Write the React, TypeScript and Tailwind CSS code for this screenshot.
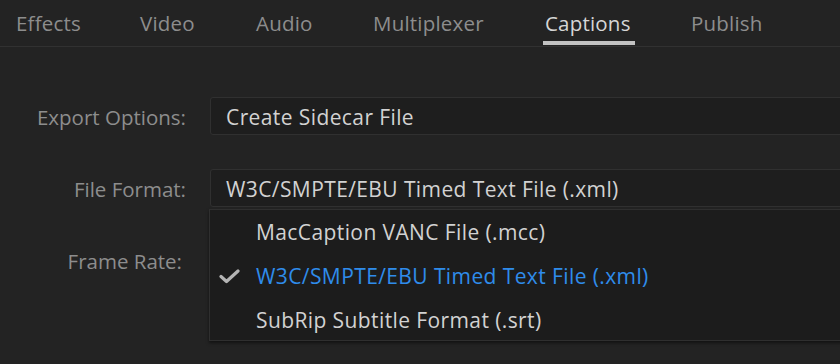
const tabs = [
  { name: "Effects", w: 124 },
  { name: "Video", w: 116 },
  { name: "Audio", w: 117 },
  { name: "Multiplexer", w: 172 },
  { name: "Captions", w: 146 },
  { name: "Publish", w: 100 },
];

const options = [
  "MacCaption VANC File (.mcc)",
  "W3C/SMPTE/EBU Timed Text File (.xml)",
  "SubRip Subtitle Format (.srt)",
];

const Field = ({ label, value, inset }: { label: string; value?: string; inset?: boolean }) => (
  <div className="flex items-center h-[38px]">
    <div
      className={`w-[186px] text-right text-[20.5px] text-[#8d8d8d] pt-[3px] ${
        inset ? "pr-[4px]" : ""
      }`}
    >
      {label}
    </div>
    <div className="ml-[24px] flex-1 h-full flex items-center rounded-[3px] border border-[#303030] bg-[#1e1e1e] pl-[15px] pt-[3px] text-[21px] tracking-[0.4px] text-[#d2d2d2]">
      {value}
    </div>
  </div>
);

export default function App() {
  return (
    <div
      className="relative w-[840px] h-[364px] overflow-hidden bg-[#232323]"
      style={{ fontFamily: '"Open Sans", sans-serif' }}
    >
      <div className="flex h-[47px] border-b border-[#313131] pl-[16px]">
        {tabs.map((t) => (
          <div key={t.name} className="flex items-center h-full shrink-0" style={{ width: t.w }}>
            <span
              className={`relative text-[20.5px] tracking-[0.2px] leading-none pt-[1px] ${
                t.name === "Captions" ? "text-[#d6d6d6]" : "text-[#8d8d8d]"
              }`}
            >
              {t.name}
              {t.name === "Captions" && (
                <span className="absolute left-[-2px] right-[-4px] top-[29px] h-[4px] bg-[#c2c2c2]" />
              )}
            </span>
          </div>
        ))}
      </div>

      <div className="flex flex-col gap-[34px] mt-[50px] mr-[-4px]">
        <Field label="Export Options:" value="Create Sidecar File" />
        <Field label="File Format:" value="W3C/SMPTE/EBU Timed Text File (.xml)" />
        <Field label="Frame Rate:" inset />
      </div>

      <div className="absolute left-[209px] top-[209px] right-[-4px] h-[132px] overflow-hidden border border-[#2f2f2f] bg-[#1c1c1c] shadow-[0_2px_3px_rgba(0,0,0,0.5)]">
        {options.map((o, i) => (
          <div key={o} className="flex items-center h-[44px]">
            <div className="w-[38px] flex justify-center">
              {i === 1 && (
                <svg width="21" height="15" viewBox="0 0 21 15" fill="none">
                  <polyline
                    points="2,7.5 7.5,12.5 19,2"
                    stroke="#b4b4b4"
                    strokeWidth="3.2"
                    strokeLinecap="round"
                    strokeLinejoin="round"
                  />
                </svg>
              )}
            </div>
            <span
              className={`ml-[8px] pt-[2px] text-[21px] tracking-[0.4px] ${
                i === 1 ? "text-[#2f8ceb]" : "text-[#d2d2d2]"
              }`}
            >
              {o}
            </span>
          </div>
        ))}
      </div>
    </div>
  );
}
